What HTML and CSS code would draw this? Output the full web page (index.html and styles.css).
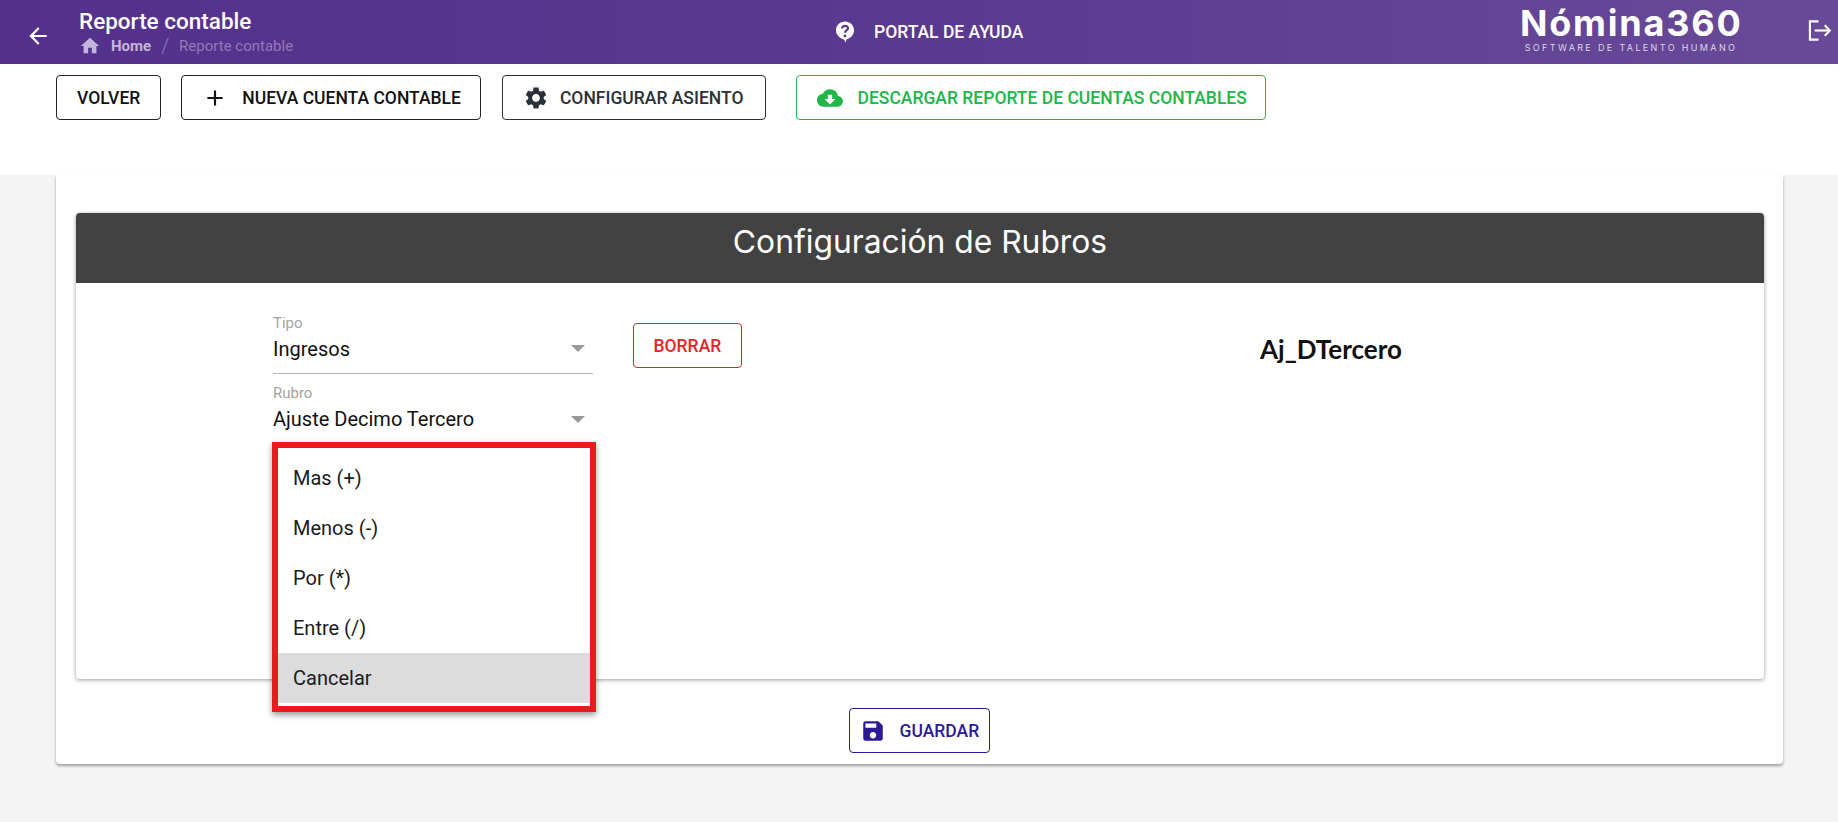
FILE: index.html
```html
<!DOCTYPE html>
<html lang="es">
<head>
    <meta charset="UTF-8">
    <meta name="viewport" content="width=device-width, initial-scale=1.0">
    <title>Reporte contable</title>
    <link rel="stylesheet" href="styles.css">
</head>
<body>

    <header class="site-header">
        <div class="header-left">
            <svg class="back-icon" viewBox="0 0 24 24"><path d="M20 11H7.83l5.59-5.59L12 4l-8 8 8 8 1.41-1.41L7.83 13H20v-2z"/></svg>
            <div class="header-titles">
                <h1>Reporte contable</h1>
                <div class="breadcrumb">
                    <svg class="home-icon" viewBox="0 0 24 24"><path d="M10 20v-6h4v6h5v-8h3L12 3 2 12h3v8z"/></svg>
                    <span class="crumb-home">Home</span>
                    <span class="crumb-sep">/</span>
                    <span class="crumb-current">Reporte contable</span>
                </div>
            </div>
        </div>
        <div class="help-link">
            <svg class="help-icon" viewBox="0 0 24 24">
                <path d="M12 1.5c-5 0-9 3.9-9 8.8 0 5 4 8.200 8 9.200l1.500 3 1.200-3.200c3.800-1 7.300-4.200 7.300-9C21 5.400 17 1.500 12 1.500z" fill="#fff"/>
                <path d="M9 8.500c0-1.700 1.300-2.700 3-2.700s3 1 3 2.500c0 2.200-3 2.200-3 4.500" fill="none" stroke="#5a3a90" stroke-width="2.200"/>
                <circle cx="12" cy="16" r="1.400" fill="#5a3a90"/>
            </svg>
            <span>PORTAL DE AYUDA</span>
        </div>
        <div class="header-right">
            <div class="logo">
                <div class="logo-name">Nómina360</div>
                <div class="logo-sub">SOFTWARE DE TALENTO HUMANO</div>
            </div>
            <svg class="logout-icon" viewBox="0 0 24 24" fill="none" stroke="#fff" stroke-width="2.200"><path d="M11 2.500H2v19h9"/><path d="M7 12h16"/><path d="M17.500 6.500l5.200 5.500-5.200 5.500"/></svg>
        </div>
    </header>

    <div class="toolbar">
        <button class="btn btn-dark">VOLVER</button>
        <button class="btn btn-dark btn-new">
            <svg class="btn-icon" viewBox="0 0 24 24"><path d="M19 13h-6v6h-2v-6H5v-2h6V5h2v6h6v2z"/></svg>
            NUEVA CUENTA CONTABLE
        </button>
        <button class="btn btn-slate btn-config">
            <svg class="btn-icon" viewBox="0 0 24 24"><path d="M19.140 12.940c.04-.3.06-.61.06-.94 0-.32-.02-.64-.07-.94l2.030-1.580c.18-.14.23-.41.12-.61l-1.920-3.320c-.12-.22-.37-.29-.59-.22l-2.390.96c-.5-.38-1.030-.7-1.620-.94l-.36-2.540c-.04-.24-.24-.41-.48-.41h-3.840c-.24 0-.43.17-.47.41l-.36 2.540c-.59.24-1.130.57-1.620.94l-2.390-.96c-.22-.08-.47 0-.59.22L2.740 8.870c-.12.21-.08.47.12.61l2.030 1.580c-.05.3-.09.63-.09.94s.02.64.07.94l-2.030 1.580c-.18.14-.23.41-.12.61l1.920 3.320c.12.22.37.29.59.22l2.390-.96c.5.38 1.030.7 1.620.94l.36 2.540c.05.24.24.41.48.41h3.840c.24 0 .44-.17.47-.41l.36-2.540c.59-.24 1.130-.56 1.620-.94l2.390.96c.22.08.47 0 .59-.22l1.920-3.320c.12-.22.07-.47-.12-.61l-2.010-1.580zM12 15.600c-1.980 0-3.600-1.620-3.600-3.600s1.620-3.600 3.600-3.600 3.600 1.620 3.600 3.600-1.620 3.600-3.600 3.600z"/></svg>
            CONFIGURAR ASIENTO
        </button>
        <button class="btn btn-green">
            <svg class="btn-icon" viewBox="0 0 24 24"><path d="M19.350 10.040C18.670 6.590 15.640 4 12 4 9.110 4 6.600 5.640 5.350 8.040 2.340 8.360 0 10.910 0 14c0 3.310 2.690 6 6 6h13c2.760 0 5-2.240 5-5 0-2.640-2.050-4.780-4.650-4.960zM17 13l-5 5-5-5h3V9h4v4h3z"/></svg>
            DESCARGAR REPORTE DE CUENTAS CONTABLES
        </button>
    </div>

    <main class="page-card">
        <section class="rubros-card">
            <h2 class="rubros-title">Configuración de Rubros</h2>
            <div class="rubros-body">
                <div class="rubros-left">
                    <div class="form-col">
                        <div class="select-field">
                            <label>Tipo</label>
                            <div class="select-value">Ingresos<span class="caret"></span></div>
                        </div>
                        <div class="select-field select-open">
                            <label>Rubro</label>
                            <div class="select-value">Ajuste Decimo Tercero<span class="caret"></span></div>
                            <ul class="select-menu">
                                <li>Mas (+)</li>
                                <li>Menos (-)</li>
                                <li>Por (*)</li>
                                <li>Entre (/)</li>
                                <li class="hovered">Cancelar</li>
                            </ul>
                        </div>
                    </div>
                    <button class="btn btn-red">BORRAR</button>
                </div>
                <div class="rubros-right">Aj_DTercero</div>
            </div>
        </section>
        <div class="save-row">
            <button class="btn btn-indigo">
                <svg class="btn-icon" viewBox="0 0 24 24"><path d="M17 3H5c-1.110 0-2 .9-2 2v14c0 1.100.89 2 2 2h14c1.100 0 2-.9 2-2V7l-4-4zm-5 16c-1.660 0-3-1.340-3-3s1.340-3 3-3 3 1.340 3 3-1.340 3-3 3zm3-10H5V5h10v4z"/></svg>
                GUARDAR
            </button>
        </div>
    </main>

</body>
</html>
```

FILE: styles.css
```css
* { box-sizing: border-box; }
html, body { margin: 0; padding: 0; }
body { height: 822px; overflow: hidden; background-color: #f4f4f4; font-family: 'Roboto', sans-serif; color: #111; }

.site-header { position: relative; display: flex; align-items: center; height: 64px; background: linear-gradient(90deg, #54308c 0%, #5a3a90 50%, #694a98 100%); color: #fff; }
.header-left { display: flex; align-items: flex-start; width: 780px; }
.back-icon { width: 26px; height: 26px; fill: #fff; margin: 17px 0 0 25px; }
.header-titles { margin-left: 28px; }
.header-titles h1 { margin: 2px 0 0; font-size: 22.5px; line-height: 26px; font-weight: 500; }
.breadcrumb { display: flex; align-items: center; height: 24px; font-size: 15px; }
.home-icon { width: 22px; height: 22px; fill: #c3b6da; }
.crumb-home { margin-left: 10px; font-weight: 700; color: #c3b6da; }
.crumb-sep { margin: 0 10px; font-size: 20px; font-weight: 300; color: #8f7bb4; }
.crumb-current { color: #8f7bb4; }

.help-link { display: flex; align-items: center; margin-left: 53px; font-size: 17.5px; font-weight: 500; }
.help-icon { width: 24px; height: 26px; margin-right: 17px; }

.header-right { display: flex; align-items: flex-start; align-self: flex-start; margin-left: auto; }
.logo { width: 222px; margin-right: 96px; padding-top: 8px; text-align: center; }
.logo-name { font-family: 'Inter', sans-serif; font-size: 36px; line-height: 30px; font-weight: 700; letter-spacing: 1.8px; white-space: nowrap; }
.logo-sub { margin-top: 4px; font-family: 'Inter', sans-serif; font-size: 9px; line-height: 12px; letter-spacing: 2.35px; white-space: nowrap; color: #ddd6ea; }
.logout-icon { position: absolute; right: 7px; top: 19px; width: 23px; height: 23px; }

.btn { display: inline-flex; align-items: center; height: 45px; padding: 0 20px; background: #fff; border: 1px solid; border-radius: 4px; font-family: 'Roboto', sans-serif; font-size: 17.5px; font-weight: 500; white-space: nowrap; cursor: pointer; }
.btn-icon { width: 26px; height: 26px; fill: currentColor; margin-right: 14px; flex: none; }
.btn-dark { color: #111; border-color: #222; }
.btn-slate { color: #2a3138; border-color: #2a3138; }
.btn-green { color: #20b648; border-color: #2cb34a; }
.btn-red { color: #e32626; border-color: #e32626; }
.btn-indigo { color: #2e1a94; border-color: #2e1a94; }

.toolbar { display: flex; align-items: flex-start; height: 111px; padding: 11px 0 0 56px; background: #fff; }
.btn-new { margin-left: 20px; padding-right: 19px; }
.btn-config { margin-left: 21px; padding-right: 22px; }
.btn-config .btn-icon { margin-right: 11px; }
.btn-green { margin-left: 30px; padding-right: 18px; }

.page-card { height: 589px; margin: 0 55px 0 56px; padding: 38px 19px 0 20px; background: #fff; border-radius: 0 0 4px 4px; box-shadow: 0 2px 3px rgba(0, 0, 0, 0.35); }
.rubros-card { height: 466px; background: #fff; border-radius: 4px; box-shadow: 0 1px 4px rgba(0, 0, 0, 0.4); }
.rubros-title { margin: 0; height: 70px; padding-top: 9px; background: #424242; border-radius: 4px 4px 0 0; color: #fff; text-align: center; font-family: 'Inter', sans-serif; font-size: 31.8px; line-height: 40px; font-weight: 400; }
.rubros-body { display: grid; grid-template-columns: 1fr 1fr; }
.rubros-left { display: flex; align-items: flex-start; padding: 31px 0 0 197px; }
.rubros-right { padding: 51px 22px 0 0; text-align: center; font-family: 'Lato', sans-serif; font-size: 26px; line-height: 30px; font-weight: 700; }

.form-col { width: 320px; }
.select-field { position: relative; height: 70px; }
.select-field label { display: block; font-size: 15px; line-height: 18px; color: #a3a3a3; }
.select-value { display: flex; align-items: center; justify-content: space-between; height: 42px; padding: 0 8px 8px 0; border-bottom: 1px solid #b5b5b5; font-size: 20px; color: #111; }
.select-open .select-value { border-bottom: none; }
.caret { width: 0; height: 0; border-left: 7px solid transparent; border-right: 7px solid transparent; border-top: 7px solid #999; }
.btn-red { margin: 9px 0 0 40px; padding: 0 19.5px; }

.select-menu { position: absolute; top: 58px; left: -1px; width: 324px; height: 270px; margin: 0; padding: 5px 0 0; list-style: none; background: #fff; border: 6px solid #e81c1f; box-shadow: 0 3px 6px rgba(0, 0, 0, 0.4); z-index: 10; }
.select-menu li { height: 50px; padding-left: 15px; font-size: 20px; line-height: 50px; color: #1b1b1b; }
.select-menu .hovered { background: #dcdcdc; }

.save-row { display: flex; justify-content: center; padding-top: 29px; padding-right: 2px; }
.btn-indigo { width: 141px; padding: 0 0 0 10px; }
.btn-indigo .btn-icon { margin-right: 14px; }
```
